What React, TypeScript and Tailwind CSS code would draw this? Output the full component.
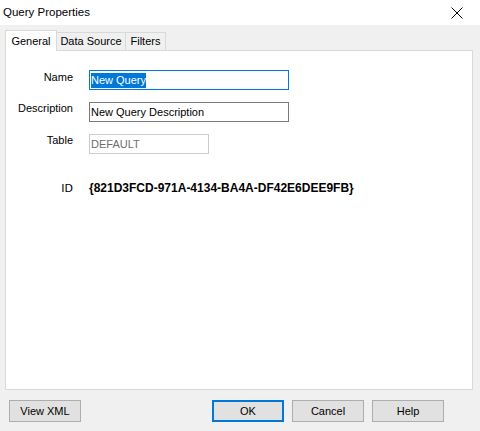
import React from "react";

const ui = { fontFamily: '"Liberation Sans", Arial, sans-serif' };

function Btn({ label, primary }: { label: string; primary?: boolean }) {
  return (
    <div
      className={
        "w-[72px] h-[22px] flex items-center justify-center bg-[#e1e1e1] text-[11px] text-black whitespace-nowrap " +
        (primary ? "border-2 border-[#0078d7]" : "border border-[#adadad]")
      }
    >
      {label}
    </div>
  );
}

export default function App() {
  return (
    <div className="w-[480px] h-[431px] bg-[#f0f0f0] flex flex-col text-black" style={ui}>
      <div className="h-[25px] bg-white flex items-center justify-between pl-[3px] pr-[17px]">
        <span className="text-[11.5px] leading-none">Query Properties</span>
        <svg width="12" height="12" viewBox="0 0 12 12">
          <path d="M0.5 0.5 L11.5 11.5 M11.5 0.5 L0.5 11.5" stroke="#000" strokeWidth="1" />
        </svg>
      </div>
      <div className="h-[25px] flex items-end pl-[5px] relative z-10">
        <div className="w-[52px] h-[21px] mb-[-1px] bg-white border border-[#d9d9d9] border-b-0 flex items-center justify-center text-[11px] whitespace-nowrap">
          General
        </div>
        <div className="w-[69px] h-[18px] bg-[#f0f0f0] border border-[#d9d9d9] border-l-0 border-b-0 flex items-center justify-center text-[11px] whitespace-nowrap">
          Data Source
        </div>
        <div className="w-[40px] h-[18px] bg-[#f0f0f0] border border-[#d9d9d9] border-l-0 border-b-0 flex items-center justify-center text-[11px] whitespace-nowrap">
          Filters
        </div>
      </div>
      <div className="mx-[5px] w-[468px] h-[340px] bg-white border border-[#d9d9d9] flex flex-col pt-[19px]">
        <div className="flex items-start h-[20px]">
          <div className="w-[67px] text-right text-[11px] leading-none pt-[2px]">Name</div>
          <div className="ml-[16px] w-[200px] h-[20px] border border-[#0078d7] flex items-center px-[1px]">
            <span className="bg-[#0078d7] text-white text-[11px] leading-[15px]">New Query</span>
          </div>
        </div>
        <div className="flex items-start h-[20px] mt-[12px]">
          <div className="w-[67px] text-right text-[11px] leading-none pt-[1px]">Description</div>
          <div className="ml-[16px] w-[200px] h-[20px] border border-[#7a7a7a] flex items-center px-[1px] text-[11px]">
            New Query Description
          </div>
        </div>
        <div className="flex items-start h-[20px] mt-[12px]">
          <div className="w-[67px] text-right text-[11px] leading-none pt-[1px]">Table</div>
          <div className="ml-[16px] w-[120px] h-[20px] border border-[#cccccc] flex items-center px-[1px] text-[11px] text-[#6d6d6d]">
            DEFAULT
          </div>
        </div>
        <div className="flex items-center mt-[27px] h-[14px]">
          <div
            className="w-[67px] text-right text-[11px] leading-none"
            style={{ fontFamily: '"DejaVu Sans", sans-serif' }}
          >
            ID
          </div>
          <div className="ml-[16px] text-[12px] font-bold leading-none">
            {"{821D3FCD-971A-4134-BA4A-DF42E6DEE9FB}"}
          </div>
        </div>
      </div>
      <div className="flex items-center mt-[10px] pl-[9px]">
        <Btn label="View XML" />
        <div className="ml-[131px] flex gap-[8px]">
          <Btn label="OK" primary />
          <Btn label="Cancel" />
          <Btn label="Help" />
        </div>
      </div>
    </div>
  );
}
